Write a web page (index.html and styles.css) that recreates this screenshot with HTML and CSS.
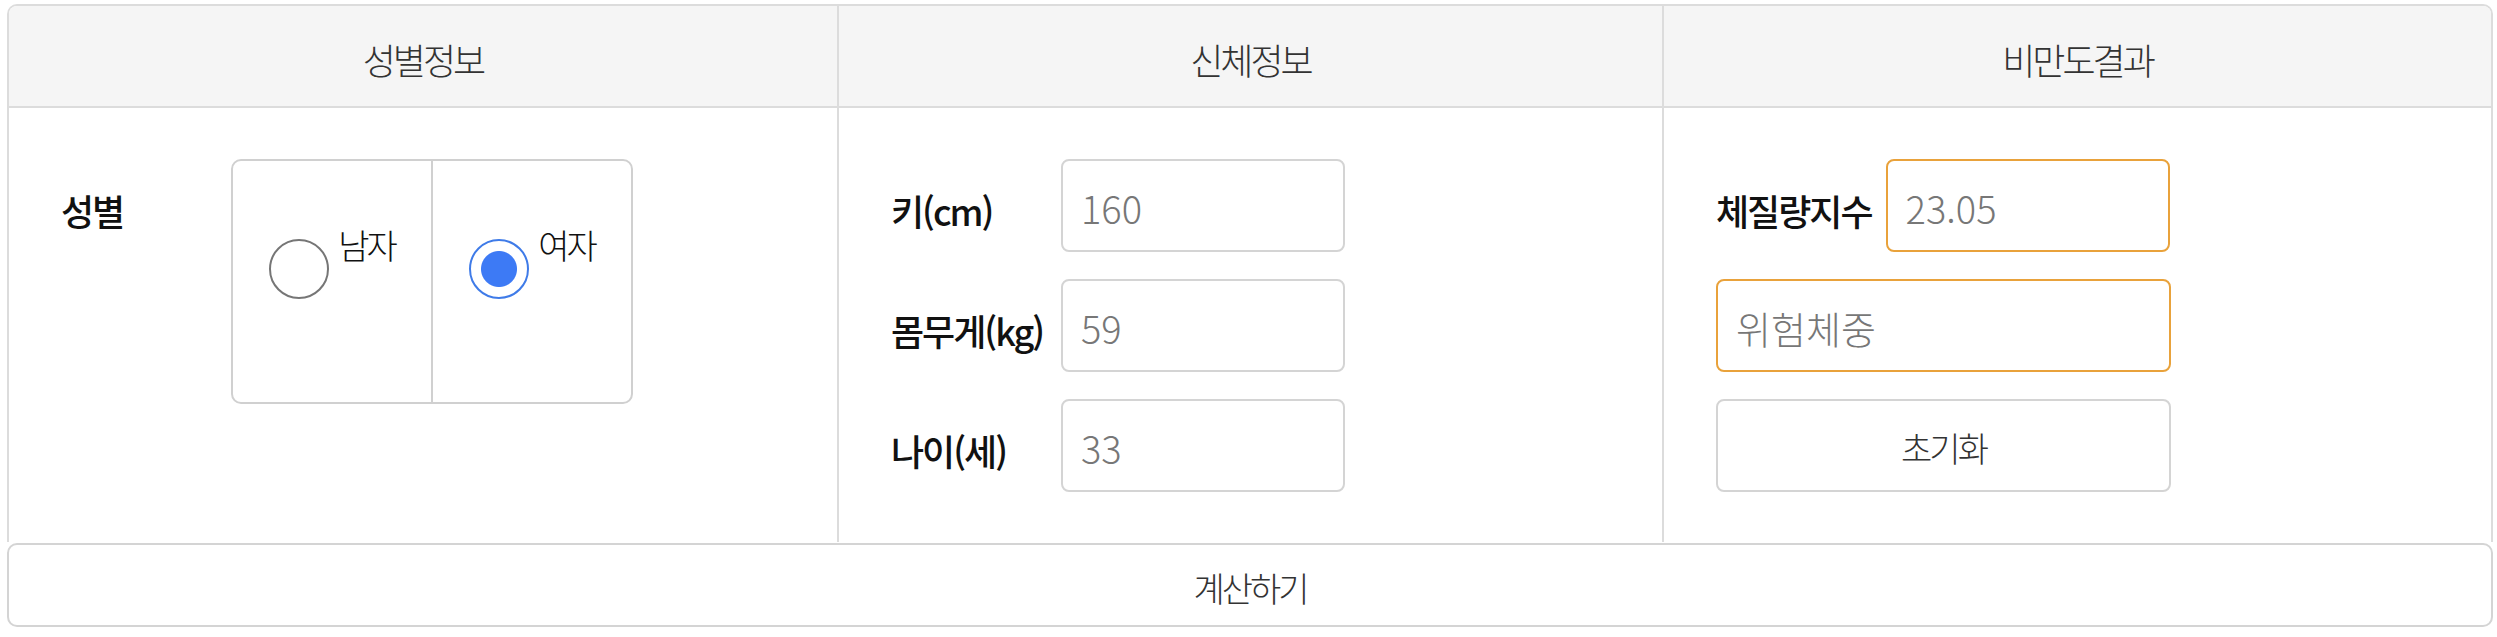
FILE: index.html
```html
<!DOCTYPE html>
<html lang="ko">
<head>
<meta charset="utf-8">
<title>비만도 계산기</title>
<link rel="stylesheet" href="styles.css">
</head>
<body>
<div class="wrap">
  <div class="panel">
    <section class="col">
      <div class="head">성별정보</div>
      <div class="body">
        <div class="row">
          <div class="label">성별</div>
          <div class="radio-box">
            <label class="radio-half">
              <span class="radio"></span>
              <span class="radio-text">남자</span>
            </label>
            <label class="radio-half">
              <span class="radio checked"></span>
              <span class="radio-text">여자</span>
            </label>
          </div>
        </div>
      </div>
    </section>
    <section class="col">
      <div class="head">신체정보</div>
      <div class="body stack">
        <div class="row">
          <div class="label">키(cm)</div>
          <div class="field">160</div>
        </div>
        <div class="row">
          <div class="label">몸무게(kg)</div>
          <div class="field">59</div>
        </div>
        <div class="row">
          <div class="label">나이(세)</div>
          <div class="field">33</div>
        </div>
      </div>
    </section>
    <section class="col">
      <div class="head">비만도결과</div>
      <div class="body stack result">
        <div class="row">
          <div class="label auto">체질량지수</div>
          <div class="field warn">23.05</div>
        </div>
        <div class="field warn wide">위험체중</div>
        <div class="btn wide">초기화</div>
      </div>
    </section>
  </div>
  <div class="btn calc">계산하기</div>
</div>
</body>
</html>
```

FILE: styles.css
```css
* { box-sizing: border-box; }

html, body {
  margin: 0;
  background: #fff;
}

body {
  padding: 4px 4px 0 7px;
  font-family: "Noto Sans CJK KR", "Noto Sans", sans-serif;
  color: #222;
}

.wrap {
  width: 2486px;
}

.panel {
  display: grid;
  grid-template-columns: 828px 825px 829px;
  border: 2px solid #dcdcdc;
  border-bottom: none;
  border-radius: 10px 10px 0 0;
  overflow: hidden;
}

.col + .col {
  border-left: 2px solid #dcdcdc;
}

.head {
  height: 102px;
  background: #f5f5f5;
  border-bottom: 2px solid #dcdcdc;
  display: flex;
  align-items: center;
  justify-content: center;
  padding-top: 6px;
  font-size: 36px;
  font-weight: 300;
  letter-spacing: -3px;
  color: #333;
}

.body {
  height: 434px;
  padding: 51px 0 0 52px;
}

.stack {
  display: flex;
  flex-direction: column;
  gap: 27px;
}

.row {
  display: flex;
  align-items: flex-start;
}

.label {
  width: 170px;
  height: 93px;
  flex: none;
  display: flex;
  align-items: center;
  padding-top: 8px;
  font-size: 36px;
  font-weight: 500;
  letter-spacing: -2px;
  color: #111;
}

.label.auto {
  width: auto;
  margin-right: 14px;
}

.field {
  width: 284px;
  height: 93px;
  border: 2px solid #d4d4d4;
  border-radius: 8px;
  display: flex;
  align-items: center;
  padding: 4px 0 0 18px;
  font-size: 38px;
  font-weight: 300;
  color: #777;
}

.field.warn {
  border-color: #e9a23b;
}

.wide {
  width: 455px;
}

.btn {
  height: 93px;
  border: 2px solid #d4d4d4;
  border-radius: 8px;
  display: flex;
  align-items: center;
  justify-content: center;
  padding-top: 4px;
  font-size: 34px;
  font-weight: 300;
  letter-spacing: -3px;
  color: #333;
}

.radio-box {
  width: 402px;
  height: 245px;
  border: 2px solid #d0d0d0;
  border-radius: 10px;
  display: flex;
}

.radio-half {
  flex: 1;
  display: flex;
  justify-content: center;
  align-items: flex-start;
  padding-top: 78px;
}

.radio-half + .radio-half {
  border-left: 2px solid #d0d0d0;
}

.radio {
  width: 60px;
  height: 60px;
  flex: none;
  border: 2px solid #767676;
  border-radius: 50%;
  margin-right: 9px;
}

.radio.checked {
  border-color: #3f7be8;
  background: radial-gradient(circle, #3d7af5 0 17.5px, #fff 18.5px);
}

.radio-text {
  font-size: 34px;
  font-weight: 300;
  letter-spacing: -3px;
  line-height: 1;
  margin-top: -11px;
  color: #111;
}

.calc {
  height: 84px;
  border-radius: 10px;
  margin-top: 1px;
  font-size: 34px;
}
```
